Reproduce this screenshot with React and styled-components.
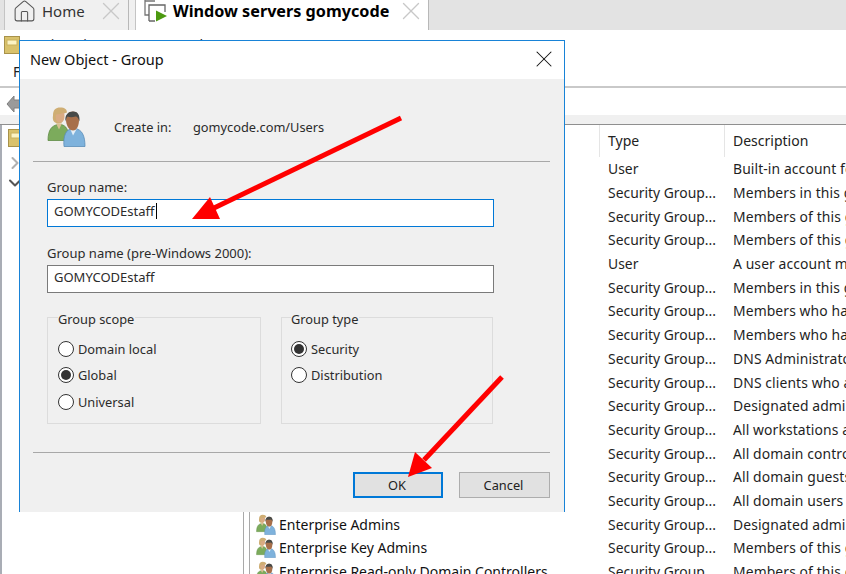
import React from 'react';
import styled, {createGlobalStyle} from 'styled-components';
import {Home as HomeIcon, X, ChevronRight, ChevronDown} from 'lucide-react';

const GlobalStyle=createGlobalStyle`
  html,body{
    margin:0;
    padding:0;
    background:white;
  }
  *{box-sizing:border-box;}
`;
const Page=styled.div`
  position:relative;
  width:846px;
  height:574px;
  overflow:hidden;
  background:white;
  color:#1f1f1f;
  font-family:"Noto Sans",sans-serif;
  font-size:14px;
`;
const TabBar=styled.div`
  display:flex;
  height:30px;
  padding-left:4px;
  background:#e3e3e3;
`;
const Tab=styled.div`
  display:flex;
  align-items:center;
  width:${props=>props.$active?'294px':'125px'};
  padding:0 2px 8px ${props=>props.$active?'8px':'7px'};
  background:${props=>props.$active?'white':'#f0f0f0'};
  border-left:1px solid #c4c4c4;
  border-right:1px solid #b8b8b8;
  font-size:${props=>props.$active?'16.2px':'15px'};
  font-weight:${props=>props.$active?'700':'400'};
  color:${props=>props.$active?'#000':'#333'};
`;
const TabGap=styled.div`
  width:6px;
  background:#f0f0f0;
`;
const TabLabel=styled.span`
  flex:1;
  margin-left:${props=>props.$active?'6px':'5px'};
  white-space:nowrap;
`;
const AppTitle=styled.div`
  display:flex;
  align-items:flex-start;
  gap:10px;
  height:33px;
  padding:6px 0 0 4px;
  font-size:14px;
  line-height:14px;
  white-space:nowrap;
`;
const TitleText=styled.span`
  margin-top:2px;
`;
const MenuBar=styled.div`
  height:25px;
  padding:0 0 0 13px;
  border-bottom:2px solid #c9c9c9;
  line-height:18px;
`;
const Toolbar=styled.div`
  display:flex;
  align-items:center;
  height:27px;
  padding:4px 0 0 6px;
`;
const Strip=styled.div`
  height:10px;
  background:#f0f0f0;
  border-bottom:1px solid #8f8f8f;
`;
const Panes=styled.div`
  display:flex;
  height:450px;
`;
const TreePane=styled.div`
  display:flex;
  flex-direction:column;
  width:244px;
  padding:4px 0 0 6px;
  border-left:2px solid #a9adb5;
  border-right:1px solid #a9a9a9;
`;
const TreeRow=styled.div`
  display:flex;
  height:20px;
  align-items:center;
  margin-left:-3px;
  margin-top:${props=>props.$gap||0}px;
`;
const ListPane=styled.div`
  flex:1;
  margin-left:5px;
  border-left:1px solid #a9a9a9;
`;
const HeaderRow=styled.div`
  display:grid;
  grid-template-columns:349px 125px 1fr;
  height:32px;
  color:#222;
`;
const HeaderCell=styled.div`
  display:flex;
  align-items:center;
  padding:0 0 2px 8px;
  border-left:${props=>props.$first?'none':'1px solid #e5e5e5'};
`;
const Row=styled.div`
  display:grid;
  grid-template-columns:349px 125px 1fr;
  height:23.7px;
  align-items:center;
  white-space:nowrap;
  overflow:hidden;
`;
const NameCell=styled.div`
  display:flex;
  align-items:center;
  gap:2px;
  padding-left:6px;
  color:#111;
`;
const Cell=styled.div`
  padding-left:9px;
  overflow:hidden;
  font-size:13.9px;
  letter-spacing:${props=>props.$desc?'0.1px':'0'};
`;
const Dialog=styled.div`
  position:absolute;
  left:19px;
  top:40px;
  width:546px;
  height:472px;
  display:flex;
  flex-direction:column;
  background:#f0f0f0;
  border:1px solid #1883d7;
  border-bottom:none;
  font-size:12.8px;
  color:#2b2b2b;
`;
const DialogTitle=styled.div`
  display:flex;
  align-items:center;
  justify-content:space-between;
  height:38px;
  padding:0 6px 2px 10px;
  background:white;
  color:#111;
  font-size:14.5px;
`;
const DialogBody=styled.div`
  display:flex;
  flex-direction:column;
  flex:1;
  padding:0 14px 0 13px;
`;
const CreateRow=styled.div`
  display:flex;
  align-items:center;
  height:83px;
  padding:13px 0 0 14px;
  border-bottom:1px solid #a8a8a8;
`;
const CreateLabel=styled.span`
  width:79px;
  margin-left:26px;
`;
const Fields=styled.div`
  display:flex;
  flex-direction:column;
  padding:16px 0 0 14px;
  font-size:13px;
`;
const FieldLabel=styled.div`
  height:21px;
  line-height:18px;
`;
const Input=styled.div`
  display:flex;
  align-items:center;
  width:447px;
  height:28px;
  margin-bottom:17px;
  padding:0 0 5px 6px;
  background:white;
  border:1px solid ${props=>props.$focus?'#0078d7':'#7a7a7a'};
`;
const Caret=styled.span`
  width:1px;
  height:16px;
  margin-left:1px;
  background:#000;
`;
const Groups=styled.div`
  display:flex;
  gap:20px;
  height:114px;
  margin-left:14px;
`;
const GroupBox=styled.fieldset`
  display:flex;
  flex-direction:column;
  width:${props=>props.$width}px;
  margin:0;
  padding:12px 0 0 ${props=>props.$inset}px;
  border:1px solid #dcdcdc;
`;
const Legend=styled.legend`
  position:relative;
  top:2px;
  padding:0 1px 0 0;
  line-height:14px;
`;
const RadioRow=styled.label`
  display:flex;
  align-items:center;
  gap:4px;
  height:26.3px;
`;
const RadioDot=styled.span`
  display:flex;
  align-items:center;
  justify-content:center;
  width:16px;
  height:16px;
  background:white;
  border:1px solid #333;
  border-radius:50%;
  &::after{
    content:"";
    display:${props=>props.$on?'block':'none'};
    width:10px;
    height:10px;
    border-radius:50%;
    background:#333;
  }
`;
const Footer=styled.div`
  display:flex;
  justify-content:flex-end;
  gap:16px;
  margin-top:28px;
  padding-top:19px;
  border-top:1px solid #a8a8a8;
`;
const Button=styled.div`
  display:flex;
  align-items:center;
  justify-content:center;
  width:${props=>props.$default?'90px':'91px'};
  height:26px;
  padding-right:2px;
  background:#e1e1e1;
  border:${props=>props.$default?'2px solid #0078d7':'1px solid #adadad'};
  color:#222;
`;
const ArrowLayer=styled.svg`
  position:absolute;
  left:0;
  top:0;
  pointer-events:none;
`;

const PeopleIcon=({size})=>(
  <svg width={size} height={size} viewBox="0 0 41 40">
    <path d="M1 34c0-11 4-15 10-16h3c5 1 8 5 8 16z" fill="#7cab5c" stroke="#5f8c45" strokeWidth="0.800" />
    <path d="M9 17l3 6 3-6z" fill="#d7bf92" />
    <path d="M6 9c0-6 3-8 7-8 5 0 7 2 7 5l-3 1c0 6-1 10-5 10-4 0-7-2-6-8z" fill="#cfae74" />
    <path d="M9 8c2 0 6-1 8-2 1 3 1 10-4 10-3 0-5-3-4-8z" fill="#d9ab84" />
    <path d="M17 40c-1-11 2-17 8-18h3c7 1 10 7 10 18z" fill="#7eb2dc" stroke="#5b8db8" strokeWidth="0.800" />
    <path d="M23 22l3 7 4-7z" fill="#e4eff8" />
    <path d="M19 13c0-5 3-8 7-8s6 3 6 8c0 6-2 11-6 11s-7-5-7-11z" fill="#a76f4a" />
    <path d="M18.500 15c-1-7 3-10 7.500-10s7 3 6.500 10c-1-3-2-5-4-5-3 1-6 1-8 0-1 1-1.500 3-2 5z" fill="#474a48" />
  </svg>
);
const FolderIcon=()=>(
  <svg width="16" height="18" viewBox="0 0 16 18">
    <rect x="0.500" y="0.500" width="15" height="17" fill="#d9c26c" stroke="#a8924a" />
    <rect x="3" y="4" width="10" height="5" fill="#fbf3c4" stroke="#c9b25f" />
  </svg>
);
const VmIcon=()=>(
  <svg width="23" height="22" viewBox="0 0 23 22">
    <path d="M5 15H1V0M1 1h10" fill="none" stroke="#777" strokeWidth="1.300" />
    <path d="M5 21V5h16v7M5 21h6" fill="none" stroke="#666" strokeWidth="1.300" />
    <path d="M12 10.500L23 16 12 21.500z" fill="#4c9a10" />
  </svg>
);
const BackArrow=()=>(
  <svg width="15" height="18" viewBox="0 0 15 18">
    <path d="M8 1L1 9l7 8v-4h7V5H8z" fill="#9a9a9a" stroke="#808080" />
  </svg>
);

const rows=[
  ['User','Built-in account for administering the computer'],
  ['Security Group...','Members in this group can have their passwords'],
  ['Security Group...','Members of this group are permitted to publish'],
  ['Security Group...','Members of this group that are domain controllers'],
  ['User','A user account managed by the system.'],
  ['Security Group...','Members in this group cannot have their passwords'],
  ['Security Group...','Members who have administrative access'],
  ['Security Group...','Members who have view-only access'],
  ['Security Group...','DNS Administrators Group'],
  ['Security Group...','DNS clients who are permitted to perform updates'],
  ['Security Group...','Designated administrators of the domain'],
  ['Security Group...','All workstations and servers joined to the domain'],
  ['Security Group...','All domain controllers in the domain'],
  ['Security Group...','All domain guests'],
  ['Security Group...','All domain users'],
  ['Security Group...','Designated administrators of the enterprise','Enterprise Admins'],
  ['Security Group...','Members of this group can perform actions','Enterprise Key Admins'],
  ['Security Group...','Members of this group are read-only','Enterprise Read-only Domain Controllers'],
];

function Radio({label,on}){
  return (
    <RadioRow>
      <RadioDot $on={on}></RadioDot>
      {label}
    </RadioRow>
  );
}

function App() {
  return (
    <Page>
      <GlobalStyle />
      <TabBar>
        <Tab>
          <HomeIcon size={25} strokeWidth={1} color="#555" />
          <TabLabel>Home</TabLabel>
          <X size={30} strokeWidth={1.1} color="#c8c8c8" />
        </Tab>
        <TabGap></TabGap>
        <Tab $active>
          <VmIcon />
          <TabLabel $active>Window servers gomycode</TabLabel>
          <X size={30} strokeWidth={1.1} color="#c8c8c8" />
        </Tab>
      </TabBar>
      <AppTitle>
        <FolderIcon />
        <TitleText>Active Directory Users and Computers</TitleText>
      </AppTitle>
      <MenuBar>File</MenuBar>
      <Toolbar><BackArrow /></Toolbar>
      <Strip></Strip>
      <Panes>
        <TreePane>
          <FolderIcon />
          <TreeRow $gap={6}><ChevronRight size={20} strokeWidth={2.5} color="#b0b0b0" /></TreeRow>
          <TreeRow><ChevronDown size={20} strokeWidth={2.5} color="#555" /></TreeRow>
        </TreePane>
        <ListPane>
          <HeaderRow>
            <HeaderCell $first></HeaderCell>
            <HeaderCell>Type</HeaderCell>
            <HeaderCell>Description</HeaderCell>
          </HeaderRow>
          {rows.map((row,index)=>(
            <Row key={index}>
              <NameCell>
                {row[2]&&<PeopleIcon size={21} />}
                {row[2]}
              </NameCell>
              <Cell>{row[0]}</Cell>
              <Cell $desc>{row[1]}</Cell>
            </Row>
          ))}
        </ListPane>
      </Panes>

      <Dialog>
        <DialogTitle>
          New Object - Group
          <X size={28} strokeWidth={0.9} color="#111" />
        </DialogTitle>
        <DialogBody>
          <CreateRow>
            <PeopleIcon size={41} />
            <CreateLabel>Create in:</CreateLabel>
            gomycode.com/Users
          </CreateRow>
          <Fields>
            <FieldLabel>Group name:</FieldLabel>
            <Input $focus>GOMYCODEstaff<Caret></Caret></Input>
            <FieldLabel>Group name (pre-Windows 2000):</FieldLabel>
            <Input>GOMYCODEstaff</Input>
          </Fields>
          <Groups>
            <GroupBox $width={214} $inset={10}>
              <Legend>Group scope</Legend>
              <Radio label="Domain local" />
              <Radio label="Global" on />
              <Radio label="Universal" />
            </GroupBox>
            <GroupBox $width={212} $inset={9}>
              <Legend>Group type</Legend>
              <Radio label="Security" on />
              <Radio label="Distribution" />
            </GroupBox>
          </Groups>
          <Footer>
            <Button $default>OK</Button>
            <Button>Cancel</Button>
          </Footer>
        </DialogBody>
      </Dialog>

      <ArrowLayer width="846" height="574" viewBox="0 0 846 574">
        <path d="M401 118L214 208" stroke="#f00" strokeWidth="5" fill="none" />
        <path d="M192 219L210 197L220 219z" fill="#f00" />
        <path d="M502 377L424 460" stroke="#f00" strokeWidth="5" fill="none" />
        <path d="M408 477L415 452L432 468z" fill="#f00" />
      </ArrowLayer>
    </Page>
  );
}

export default App;
